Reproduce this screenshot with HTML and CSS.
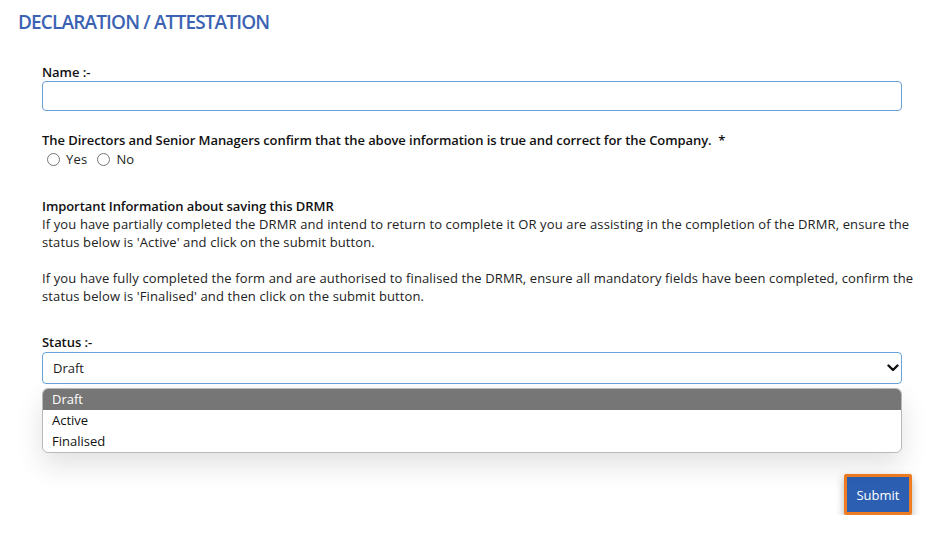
FILE: index.html
```html
<!DOCTYPE html>
<html lang="en">
<head>
<meta charset="utf-8">
<title>Declaration / Attestation</title>
<link rel="stylesheet" href="styles.css">
</head>
<body>
<h1 class="title">DECLARATION / ATTESTATION</h1>
<form class="form">
  <div class="field">
    <label class="label" for="name">Name :-</label>
    <input class="text-input" id="name" type="text">
  </div>

  <div class="field field-question">
    <div class="label">The Directors and Senior Managers confirm that the above information is true and correct for the Company.&nbsp; *</div>
    <div class="radios">
      <label class="radio"><input type="radio" name="confirm"> Yes</label>
      <label class="radio"><input type="radio" name="confirm"> No</label>
    </div>
  </div>

  <div class="info">
    <div class="label">Important Information about saving this DRMR</div>
    <p class="para">If you have partially completed the DRMR and intend to return to complete it OR you are assisting in the completion of the DRMR, ensure the status below is 'Active' and click on the submit button.</p>
    <p class="para">If you have fully completed the form and are authorised to finalised the DRMR, ensure all mandatory fields have been completed, confirm the status below is 'Finalised' and then click on the submit button.</p>
  </div>

  <div class="field field-status">
    <label class="label" for="status">Status :-</label>
    <div class="select-wrap">
      <select class="select" id="status">
        <option>Draft</option>
        <option>Active</option>
        <option>Finalised</option>
      </select>
      <svg class="chevron" width="12" height="8" viewBox="0 0 12 8"><path d="M1.5 1.5 L6 6 L10.5 1.5" fill="none" stroke="#111" stroke-width="2.4" stroke-linecap="round" stroke-linejoin="round"/></svg>
      <ul class="options">
        <li class="option selected">Draft</li>
        <li class="option">Active</li>
        <li class="option">Finalised</li>
      </ul>
    </div>
  </div>

  <div class="actions">
    <button type="button" class="submit">Submit</button>
  </div>
</form>
</body>
</html>
```

FILE: styles.css
```css
* { box-sizing: border-box; }

html, body {
  margin: 0;
  padding: 0;
  background: #ffffff;
}

body {
  font-family: "Open Sans", "DejaVu Sans", sans-serif;
  color: #1c1c1c;
  font-size: 13px;
  line-height: 18px;
}

.title {
  margin: 0;
  padding: 11px 0 0 18px;
  font-size: 19px;
  line-height: 22px;
  font-weight: 600;
  color: #3c63b3;
  letter-spacing: -0.85px;
}

.form {
  width: 883px;
  margin: 30px 0 0 42px;
}

.label {
  display: block;
  font-weight: 600;
  color: #111;
  font-size: 13px;
  line-height: 18px;
  letter-spacing: -0.07px;
}

.text-input {
  display: block;
  width: 860px;
  height: 30px;
  margin: 0;
  border: 1px solid #6aa2d8;
  border-radius: 4px;
  background: #fff;
  font: inherit;
}

.field-question {
  margin-top: 20px;
}

.radios {
  display: flex;
  align-items: center;
  height: 18px;
  margin-top: 1px;
}

.radio {
  display: flex;
  align-items: center;
  font-size: 13px;
  color: #222;
  margin-right: 5px;
  letter-spacing: 0.2px;
}

.radio input {
  width: 13px;
  height: 13px;
  margin: 0 6px 0 5px;
}

.info {
  margin-top: 29px;
}

.para {
  margin: 0;
  color: #222;
  letter-spacing: 0.12px;
}

.para + .para {
  margin-top: 18px;
}

.field-status {
  margin-top: 28px;
}

.select-wrap {
  position: relative;
  width: 860px;
  margin-top: 1px;
}

.select {
  display: block;
  width: 860px;
  height: 32px;
  margin: 0;
  padding: 0 10px;
  border: 1px solid #6aa2d8;
  border-radius: 4px;
  background: #fff;
  font: inherit;
  color: #1c1c1c;
  -webkit-appearance: none;
  appearance: none;
}

.chevron {
  position: absolute;
  right: 3px;
  top: 12px;
}

.options {
  position: absolute;
  left: 0;
  top: 36px;
  width: 860px;
  margin: 0;
  padding: 0;
  list-style: none;
  background: #fff;
  border: 1px solid #b9b9b9;
  border-radius: 6px;
  overflow: hidden;
  box-shadow: 0 12px 28px rgba(0, 0, 0, 0.12);
  z-index: 2;
}

.option {
  height: 21px;
  line-height: 20px;
  padding-left: 9px;
  color: #111;
  font-size: 13px;
}

.option.selected {
  background: #767676;
  color: #fff;
}

.actions {
  display: flex;
  justify-content: flex-end;
  width: 870px;
  margin-top: 90px;
}

.submit {
  width: 68px;
  height: 41px;
  padding: 0;
  background: #2c5fb2;
  color: #fff;
  font: inherit;
  font-size: 13px;
  border: 3px solid #f07c21;
  border-radius: 2px;
  box-shadow: 0 4px 8px rgba(0, 0, 0, 0.3);
}
```
